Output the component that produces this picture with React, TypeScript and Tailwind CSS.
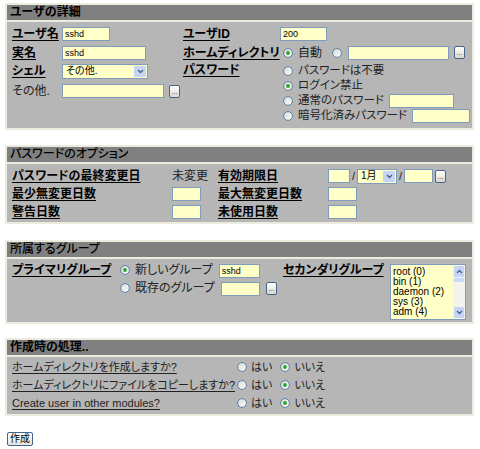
import React from 'react';

// old-style admin form: gray panels, yellow fields, XP-ish controls

function Radio({ on }: { on?: boolean }) {
  return (
    <svg width="10" height="10" viewBox="0 0 10 10" className="shrink-0">
      <defs>
        <linearGradient id="rg" x1="0" y1="0" x2="1" y2="1">
          <stop offset="0" stopColor="#d8d8d2" />
          <stop offset="1" stopColor="#ffffff" />
        </linearGradient>
      </defs>
      <circle cx="5" cy="5" r="4.4" fill="url(#rg)" stroke="#5a7ea8" strokeWidth="1" />
      {on && <circle cx="5" cy="5" r="1.9" fill="#22a82a" />}
    </svg>
  );
}

function Field({ w, value }: { w: string; value?: string }) {
  return (
    <input
      readOnly
      value={value ?? ''}
      className={`h-[14px] shrink-0 border border-[#7f9db9] bg-[#ffffc8] px-[2px] text-[9px] leading-none text-black outline-none ${w}`}
    />
  );
}

function Dots() {
  return (
    <span className="inline-flex h-[13px] w-[11px] shrink-0 items-end justify-center rounded-[2px] border border-[#46658e] bg-gradient-to-b from-white to-[#d9d9cf] pb-[1px] text-[7px] leading-[8px] text-[#333]">
      ...
    </span>
  );
}

function Chevron() {
  return (
    <svg width="7" height="5" viewBox="0 0 7 5">
      <path d="M1 1 L3.5 3.5 L6 1" fill="none" stroke="#4d6185" strokeWidth="1.4" />
    </svg>
  );
}

function Select({ w, value }: { w: string; value: string }) {
  return (
    <span
      className={`inline-flex h-[15px] shrink-0 items-center justify-between border border-[#7f9db9] bg-[#ffffc8] pl-[3px] pr-[1px] text-[10px] leading-none text-black ${w}`}
    >
      <span>{value}</span>
      <span className="flex h-[11px] w-[12px] items-center justify-center rounded-[1px] bg-[#c5d5f6]">
        <Chevron />
      </span>
    </span>
  );
}

function Label({ children }: { children: React.ReactNode }) {
  return (
    <span className="whitespace-nowrap text-[12px] font-bold leading-none text-black underline underline-offset-[2px]">
      {children}
    </span>
  );
}

function Section({
  title,
  bold,
  body,
  children,
}: {
  title: string;
  bold?: boolean;
  body: string;
  children: React.ReactNode;
}) {
  return (
    <div className="flex w-[469px] flex-col gap-[2px] bg-[#ebebe0] p-[2px]">
      <div
        className={`h-[15px] whitespace-nowrap bg-[#808080] px-[3px] text-[12px] leading-[15px] text-black ${bold ? 'font-bold' : 'font-medium'}`}
      >
        {title}
      </div>
      <div className={`bg-[#b6b6b6] ${body}`}>{children}</div>
    </div>
  );
}

const groups = ['root (0)', 'bin (1)', 'daemon (2)', 'sys (3)', 'adm (4)'];

export default function App() {
  return (
    <div className="min-h-screen w-[480px] bg-white pl-[5px] pt-[3px] font-['Liberation_Sans','Noto_Sans_CJK_JP',sans-serif] text-[11px] text-[#222] [font-feature-settings:'palt']">
      {/* ユーザの詳細 */}
      <Section title="ユーザの詳細" bold body="h-[106px]">
        <div className="flex pl-[5px] pt-[2px]">
          <div className="grid w-[171px] grid-cols-[50px_1fr] grid-rows-[19px_19px_18px_22px] items-center">
            <Label>ユーザ名</Label>
            <Field w="w-[48px]" value="sshd" />
            <Label>実名</Label>
            <Field w="w-[84px]" value="sshd" />
            <Label>シェル</Label>
            <Select w="w-[86px]" value="その他." />
            <span className="whitespace-nowrap text-[12px] leading-none">その他.</span>
            <div className="flex items-center gap-[5px]">
              <Field w="w-[102px]" />
              <Dots />
            </div>
          </div>
          <div className="grid w-[288px] grid-cols-[97px_1fr] grid-rows-[19px_19px_auto] items-center">
            <Label>ユーザID</Label>
            <Field w="w-[47px]" value="200" />
            <Label>ホームディレクトリ</Label>
            <div className="flex items-center pl-[3px]">
              <Radio on />
              <span className="ml-[5px] text-[12px] leading-none">自動</span>
              <span className="ml-[10px]">
                <Radio />
              </span>
              <span className="ml-[6px]">
                <Field w="w-[101px]" />
              </span>
              <span className="ml-[5px] flex">
                <Dots />
              </span>
            </div>
            <div className="flex h-[15px] items-center self-start pt-[1px]">
              <Label>パスワード</Label>
            </div>
            <div className="flex flex-col pl-[3px] pt-[1px]">
              <div className="flex h-[15px] items-center gap-[5px]">
                <Radio />
                <span className="whitespace-nowrap text-[11.5px] leading-none">パスワードは不要</span>
              </div>
              <div className="flex h-[15px] items-center gap-[5px]">
                <Radio on />
                <span className="whitespace-nowrap text-[11.5px] leading-none">ログイン禁止</span>
              </div>
              <div className="flex h-[15px] items-center gap-[5px]">
                <Radio />
                <span className="whitespace-nowrap text-[11.5px] leading-none">通常のパスワード</span>
                <Field w="w-[65px]" />
              </div>
              <div className="flex h-[16px] items-center gap-[5px]">
                <Radio />
                <span className="whitespace-nowrap text-[11.5px] leading-none">暗号化済みパスワード</span>
                <Field w="w-[58px]" />
              </div>
            </div>
          </div>
        </div>
      </Section>

      {/* パスワードのオプション */}
      <div className="mt-[15px]">
        <Section title="パスワードのオプション" body="h-[58px]">
          <div className="grid grid-cols-[160px_46px_110px_1fr] grid-rows-[18px_18px_18px] items-center pl-[5px] pt-[3px]">
            <Label>パスワードの最終変更日</Label>
            <span className="whitespace-nowrap text-[12px] leading-none">未変更</span>
            <Label>有効期限日</Label>
            <div className="flex items-center gap-[2px]">
              <Field w="w-[22px]" />
              <span className="text-[11px] leading-none">/</span>
              <Select w="w-[40px]" value="1月" />
              <span className="text-[11px] leading-none">/</span>
              <Field w="w-[29px]" />
              <Dots />
            </div>
            <Label>最少無変更日数</Label>
            <Field w="w-[29px]" />
            <Label>最大無変更日数</Label>
            <Field w="w-[29px]" />
            <Label>警告日数</Label>
            <Field w="w-[29px]" />
            <Label>未使用日数</Label>
            <Field w="w-[29px]" />
          </div>
        </Section>
      </div>

      {/* 所属するグループ */}
      <div className="mt-[16px]">
        <Section title="所属するグループ" body="h-[63px]">
          <div className="flex pl-[5px] pt-[2px]">
            <div className="flex h-[18px] w-[108px] items-center">
              <Label>プライマリグループ</Label>
            </div>
            <div className="flex w-[163px] flex-col">
              <div className="flex h-[18px] items-center">
                <Radio on />
                <span className="ml-[5px] whitespace-nowrap text-[12px] leading-none">新しいグループ</span>
                <span className="ml-[6px]">
                  <Field w="w-[41px]" value="sshd" />
                </span>
              </div>
              <div className="flex h-[18px] items-center">
                <Radio />
                <span className="ml-[5px] whitespace-nowrap text-[12px] leading-none">既存のグループ</span>
                <span className="ml-[6px]">
                  <Field w="w-[39px]" />
                </span>
                <span className="ml-[6px] flex">
                  <Dots />
                </span>
              </div>
            </div>
            <div className="flex h-[18px] w-[107px] items-center">
              <Label>セカンダリグループ</Label>
            </div>
            <div className="mt-[3px] flex h-[56px] w-[76px] border border-[#7f9db9] bg-[#ffffc8]">
              <div className="flex flex-1 flex-col pl-[2px] pt-[2px]">
                {groups.map((g) => (
                  <span key={g} className="h-[10px] whitespace-nowrap text-[10px] leading-[10px] text-black">
                    {g}
                  </span>
                ))}
              </div>
              <div className="flex w-[12px] flex-col justify-between bg-[#f4f4ee] p-[1px]">
                <div className="flex flex-col gap-[1px]">
                  <span className="flex h-[11px] items-center justify-center rounded-[1px] bg-[#c5d5f6]">
                    <svg width="7" height="5" viewBox="0 0 7 5">
                      <path d="M1 4 L3.5 1.5 L6 4" fill="none" stroke="#4d6185" strokeWidth="1.4" />
                    </svg>
                  </span>
                  <span className="h-[4px] rounded-[1px] bg-[#c9d8f8]" />
                </div>
                <span className="flex h-[11px] items-center justify-center rounded-[1px] bg-[#c5d5f6]">
                  <Chevron />
                </span>
              </div>
            </div>
          </div>
        </Section>
      </div>

      {/* 作成時の処理 */}
      <div className="mt-[14px]">
        <Section title="作成時の処理.." bold body="h-[57px]">
          <div className="grid grid-cols-[225px_1fr] grid-rows-[18px_18px_18px] items-center pl-[5px] pt-[1px]">
            {[
              'ホームディレクトリを作成しますか?',
              'ホームディレクトリにファイルをコピーしますか?',
              'Create user in other modules?',
            ].map((q) => (
              <React.Fragment key={q}>
                <span className="whitespace-nowrap text-[11px] leading-none text-[#222] underline underline-offset-[2px]">
                  {q}
                </span>
                <div className="flex items-center">
                  <Radio />
                  <span className="ml-[4px] text-[11px] leading-none">はい</span>
                  <span className="ml-[8px]">
                    <Radio on />
                  </span>
                  <span className="ml-[4px] text-[11px] leading-none">いいえ</span>
                </div>
              </React.Fragment>
            ))}
          </div>
        </Section>
      </div>

      <div className="mt-[16px] pl-[2px]">
        <button className="flex h-[14px] w-[26px] items-center justify-center rounded-[2px] border border-[#46658e] bg-gradient-to-b from-white to-[#e4e4dc] text-[10px] leading-none text-black">
          作成
        </button>
      </div>
    </div>
  );
}
